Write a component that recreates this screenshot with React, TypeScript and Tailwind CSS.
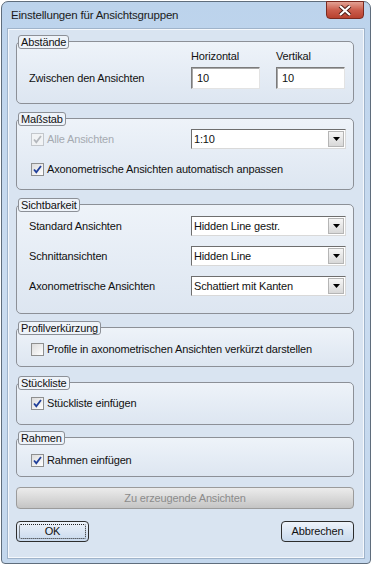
import React from "react";

const font = { fontFamily: '"Liberation Sans", Arial, sans-serif' };

function CheckBox({ checked, disabled }: { checked?: boolean; disabled?: boolean }) {
  return (
    <span
      className={`flex h-[13px] w-[13px] shrink-0 items-center justify-center border ${
        disabled ? "border-[#c3c7cc] bg-[#f1f3f5]" : "border-[#8e8f8f] bg-linear-to-br from-[#dcdcdc] to-[#ffffff]"
      }`}
    >
      {checked && (
        <svg width="9" height="9" viewBox="0 0 9 9">
          <path
            d="M1 4.5 L3.3 7.2 L8 1"
            fill="none"
            stroke={disabled ? "#b4b8bd" : "#21409a"}
            strokeWidth="1.8"
          />
        </svg>
      )}
    </span>
  );
}

function CheckRow({ label, checked, disabled }: { label: string; checked?: boolean; disabled?: boolean }) {
  return (
    <div className="flex h-[14px] items-center gap-[3px]">
      <CheckBox checked={checked} disabled={disabled} />
      <span className={disabled ? "text-[#a5aab1]" : "text-[#111]"}>{label}</span>
    </div>
  );
}

function Select({ value, h }: { value: string; h: string }) {
  return (
    <div
      className={`flex w-[155px] ${h} items-center border border-t-[#6e6e6e] border-l-[#6e6e6e] border-r-[#d9d9d9] border-b-[#d9d9d9] bg-white`}
    >
      <span className="flex-1 pl-[2px] text-[#111]">{value}</span>
      <span className="mr-[1px] flex h-[calc(100%-2px)] w-[16px] items-center justify-center border border-[#b5b5b5] bg-linear-to-b from-[#f6f6f6] to-[#d8d8d8]">
        <svg width="7" height="4" viewBox="0 0 7 4">
          <path d="M0 0 H7 L3.5 4 Z" fill="#000" />
        </svg>
      </span>
    </div>
  );
}

function TextInput({ value }: { value: string }) {
  return (
    <div className="flex h-[22px] w-[69px] items-center border border-t-[#7b7b7b] border-l-[#7b7b7b] border-r-[#e3e3e3] border-b-[#e3e3e3] bg-white pl-[5px] shadow-[inset_1px_1px_0_#a8a8a8] text-[#111]">
      {value}
    </div>
  );
}

function GroupBox({
  label,
  className,
  children,
}: {
  label: string;
  className: string;
  children?: React.ReactNode;
}) {
  return (
    <div
      className={`relative rounded-[5px] border border-[#8c9097] bg-linear-to-b from-[#eef3f9] to-[#dde6f1] ${className}`}
    >
      <span className="absolute -top-[7px] left-[1px] rounded-[3px] border border-[#8c9097] bg-[#eef3f9] px-[2px] leading-[12px] text-[#111]">
        {label}
      </span>
      {children}
    </div>
  );
}

export default function App() {
  return (
    <div className="h-[566px] w-[372px] overflow-hidden bg-white text-[11px] tracking-[-0.15px]" style={font}>
      <div className="relative ml-[1px] mt-[1px] flex h-[563px] w-[370px] flex-col rounded-t-[7px] rounded-b-[4px] border border-[#5f6d7c] bg-linear-to-b from-[#bcd3ec] via-[#cadcf0] to-[#c3d7ed]">
        {/* Title bar */}
        <div className="flex h-[27px] items-center pl-[9px] text-[11.5px] tracking-[-0.2px] text-[#1b1b1b]">
          Einstellungen für Ansichtsgruppen
        </div>
        <div className="absolute -top-[1px] right-[6px] flex h-[18px] w-[38px] items-center justify-center rounded-b-[4px] border border-[#7b2a20] bg-linear-to-b from-[#e2a194] via-[#cb5d4c] to-[#b8412f]">
          <svg width="14" height="11" viewBox="0 0 14 11">
            <path d="M2 1 L12 10 M12 1 L2 10" stroke="#4a1a14" strokeWidth="4" />
            <path d="M2 1 L12 10 M12 1 L2 10" stroke="#ffffff" strokeWidth="2.2" />
          </svg>
        </div>

        {/* Client area */}
        <div className="mx-[6px] flex h-[529px] flex-col border border-[#f5f8fc] bg-[#d9e4f1] pl-[7px] pr-[9px] pt-[11px] shadow-[0_0_0_1px_#9fb3ca]">
          <GroupBox label="Abstände" className="h-[63px]">
            <div className="grid grid-cols-[158px_69px_69px] gap-x-[16px] pt-[7px]">
              <div />
              <div className="h-[14px] leading-[14px] text-[#111]">Horizontal</div>
              <div className="h-[14px] leading-[14px] text-[#111]">Vertikal</div>
              <div className="mt-[4px] flex items-center pl-[12px] pt-[1px] text-[#111]">Zwischen den Ansichten</div>
              <div className="mt-[4px]">
                <TextInput value="10" />
              </div>
              <div className="mt-[4px]">
                <TextInput value="10" />
              </div>
            </div>
          </GroupBox>

          <GroupBox label="Maßstab" className="mt-[14px] h-[72px]">
            <div className="mt-[10px] flex h-[20px] items-center pl-[14px]">
              <div className="w-[160px]">
                <CheckRow label="Alle Ansichten" checked disabled />
              </div>
              <Select value="1:10" h="h-[20px]" />
            </div>
            <div className="mt-[13px] pl-[14px]">
              <CheckRow label="Axonometrische Ansichten automatisch anpassen" checked />
            </div>
          </GroupBox>

          <GroupBox label="Sichtbarkeit" className="mt-[14px] h-[110px]">
            <div className="flex flex-col gap-[10px] pt-[11px]">
              {[
                ["Standard Ansichten", "Hidden Line gestr."],
                ["Schnittansichten", "Hidden Line"],
                ["Axonometrische Ansichten", "Schattiert mit Kanten"],
              ].map(([l, v]) => (
                <div key={l} className="flex h-[20px] items-center">
                  <span className="w-[174px] pl-[12px] text-[#111]">{l}</span>
                  <Select value={v} h="h-[20px]" />
                </div>
              ))}
            </div>
          </GroupBox>

          <GroupBox label="Profilverkürzung" className="mt-[13px] h-[40px]">
            <div className="pl-[14px] pt-[14px]">
              <CheckRow label="Profile in axonometrischen Ansichten verkürzt darstellen" />
            </div>
          </GroupBox>

          <GroupBox label="Stückliste" className="mt-[15px] h-[43px]">
            <div className="pl-[14px] pt-[13px]">
              <CheckRow label="Stückliste einfügen" checked />
            </div>
          </GroupBox>

          <GroupBox label="Rahmen" className="mt-[12px] h-[40px]">
            <div className="pl-[14px] pt-[15px]">
              <CheckRow label="Rahmen einfügen" checked />
            </div>
          </GroupBox>

          <div className="mt-[10px] flex h-[22px] items-center justify-center rounded-[4px] border border-[#9b9b9b] bg-linear-to-b from-[#ececec] via-[#d9d9d9] to-[#c4c4c4] text-[#8b8b8b]">
            Zu erzeugende Ansichten
          </div>

          <div className="mt-[12px] flex justify-between">
            <div className="flex h-[21px] w-[73px] rounded-[4px] border border-[#2d2d2d] bg-linear-to-b from-[#eef3fa] to-[#c8d9ed] p-[2px]">
              <div className="flex flex-1 items-center justify-center rounded-[2px] border border-dotted border-[#222] text-[#111]">
                OK
              </div>
            </div>
            <div className="flex h-[21px] w-[73px] items-center justify-center rounded-[4px] border border-[#2d2d2d] bg-linear-to-b from-[#eef3fa] to-[#c8d9ed] text-[#111]">
              Abbrechen
            </div>
          </div>
        </div>
      </div>
    </div>
  );
}
